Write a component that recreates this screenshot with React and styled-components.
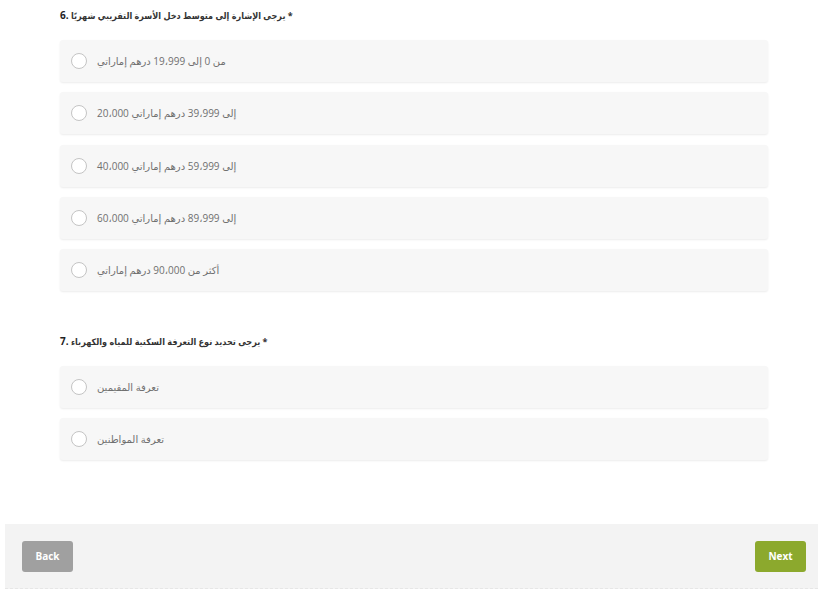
import React from 'react'
import styled, { createGlobalStyle } from 'styled-components'

const GlobalStyle = createGlobalStyle`
  html, body { margin: 0; padding: 0; background: #fff; }
  body { font-family: "Open Sans", "DejaVu Sans", sans-serif; }
`

const questions = [
  {
    num: '6.',
    title: 'يرجى الإشارة إلى متوسط دخل الأسرة التقريبي شهريًا *',
    options: [
      'من 0 إلى 19،999 درهم إماراتي',
      '20،000 إلى 39،999 درهم إماراتي',
      '40،000 إلى 59،999 درهم إماراتي',
      '60،000 إلى 89،999 درهم إماراتي',
      'أكثر من 90،000 درهم إماراتي',
    ],
  },
  {
    num: '7.',
    title: 'يرجى تحديد نوع التعرفة السكنية للمياه والكهرباء *',
    options: ['تعرفة المقيمين', 'تعرفة المواطنين'],
  },
]

export default function App() {
  return (
    <>
      <GlobalStyle />
      <Page>
        <Survey>
          {questions.map((q) => (
            <Question key={q.num}>
              <Title>
                <Num>{q.num}</Num> {q.title}
              </Title>
              <Options>
                {q.options.map((o) => (
                  <Option key={o}>
                    <Radio />
                    <Label>{o}</Label>
                  </Option>
                ))}
              </Options>
            </Question>
          ))}
        </Survey>
        <Footer>
          <Button>Back</Button>
          <Button $primary>Next</Button>
        </Footer>
      </Page>
    </>
  )
}

const Page = styled.div`
  width: 825px;
  min-height: 597px;
`

const Survey = styled.div`
  padding: 9px 57px 0 60px;
  display: flex;
  flex-direction: column;
  gap: 44px;
`

const Question = styled.div`
  display: flex;
  flex-direction: column;
  gap: 17px;
`

const Title = styled.div`
  font-family: "Open Sans", "DejaVu Sans Condensed", "DejaVu Sans", sans-serif;
  font-size: 9px;
  line-height: 14px;
  height: 14px;
  font-weight: 700;
  color: #333;
`

const Num = styled.span`
  font-size: 10px;
  line-height: 1;
  color: #222;
`

const Options = styled.div`
  display: flex;
  flex-direction: column;
  gap: 10.25px;
`

const Option = styled.div`
  height: 42px;
  box-sizing: border-box;
  background: #f7f7f7;
  border-radius: 3px;
  box-shadow: 0 1px 2px rgba(0, 0, 0, 0.08);
  display: flex;
  align-items: center;
  padding-left: 11px;
  gap: 10px;
`

const Radio = styled.span`
  width: 16px;
  height: 16px;
  box-sizing: border-box;
  border-radius: 50%;
  border: 1px solid #c4c4c4;
  background: #fff;
  flex-shrink: 0;
`

const Label = styled.span`
  font-size: 10px;
  color: #707070;
`

const Footer = styled.div`
  margin: 64px 7px 0 5px;
  height: 65px;
  box-sizing: border-box;
  background: #f3f3f3;
  border-bottom: 1px dashed #e6e6e6;
  padding: 0 12px 0 17px;
  display: flex;
  align-items: center;
  justify-content: space-between;
`

const Button = styled.button`
  width: 51px;
  height: 31px;
  border: none;
  border-radius: 3px;
  background: ${(p) => (p.$primary ? '#8ca92d' : '#a0a0a0')};
  color: #fff;
  font-family: "Open Sans", sans-serif;
  font-weight: 700;
  font-size: 10px;
  padding: 0;
`
